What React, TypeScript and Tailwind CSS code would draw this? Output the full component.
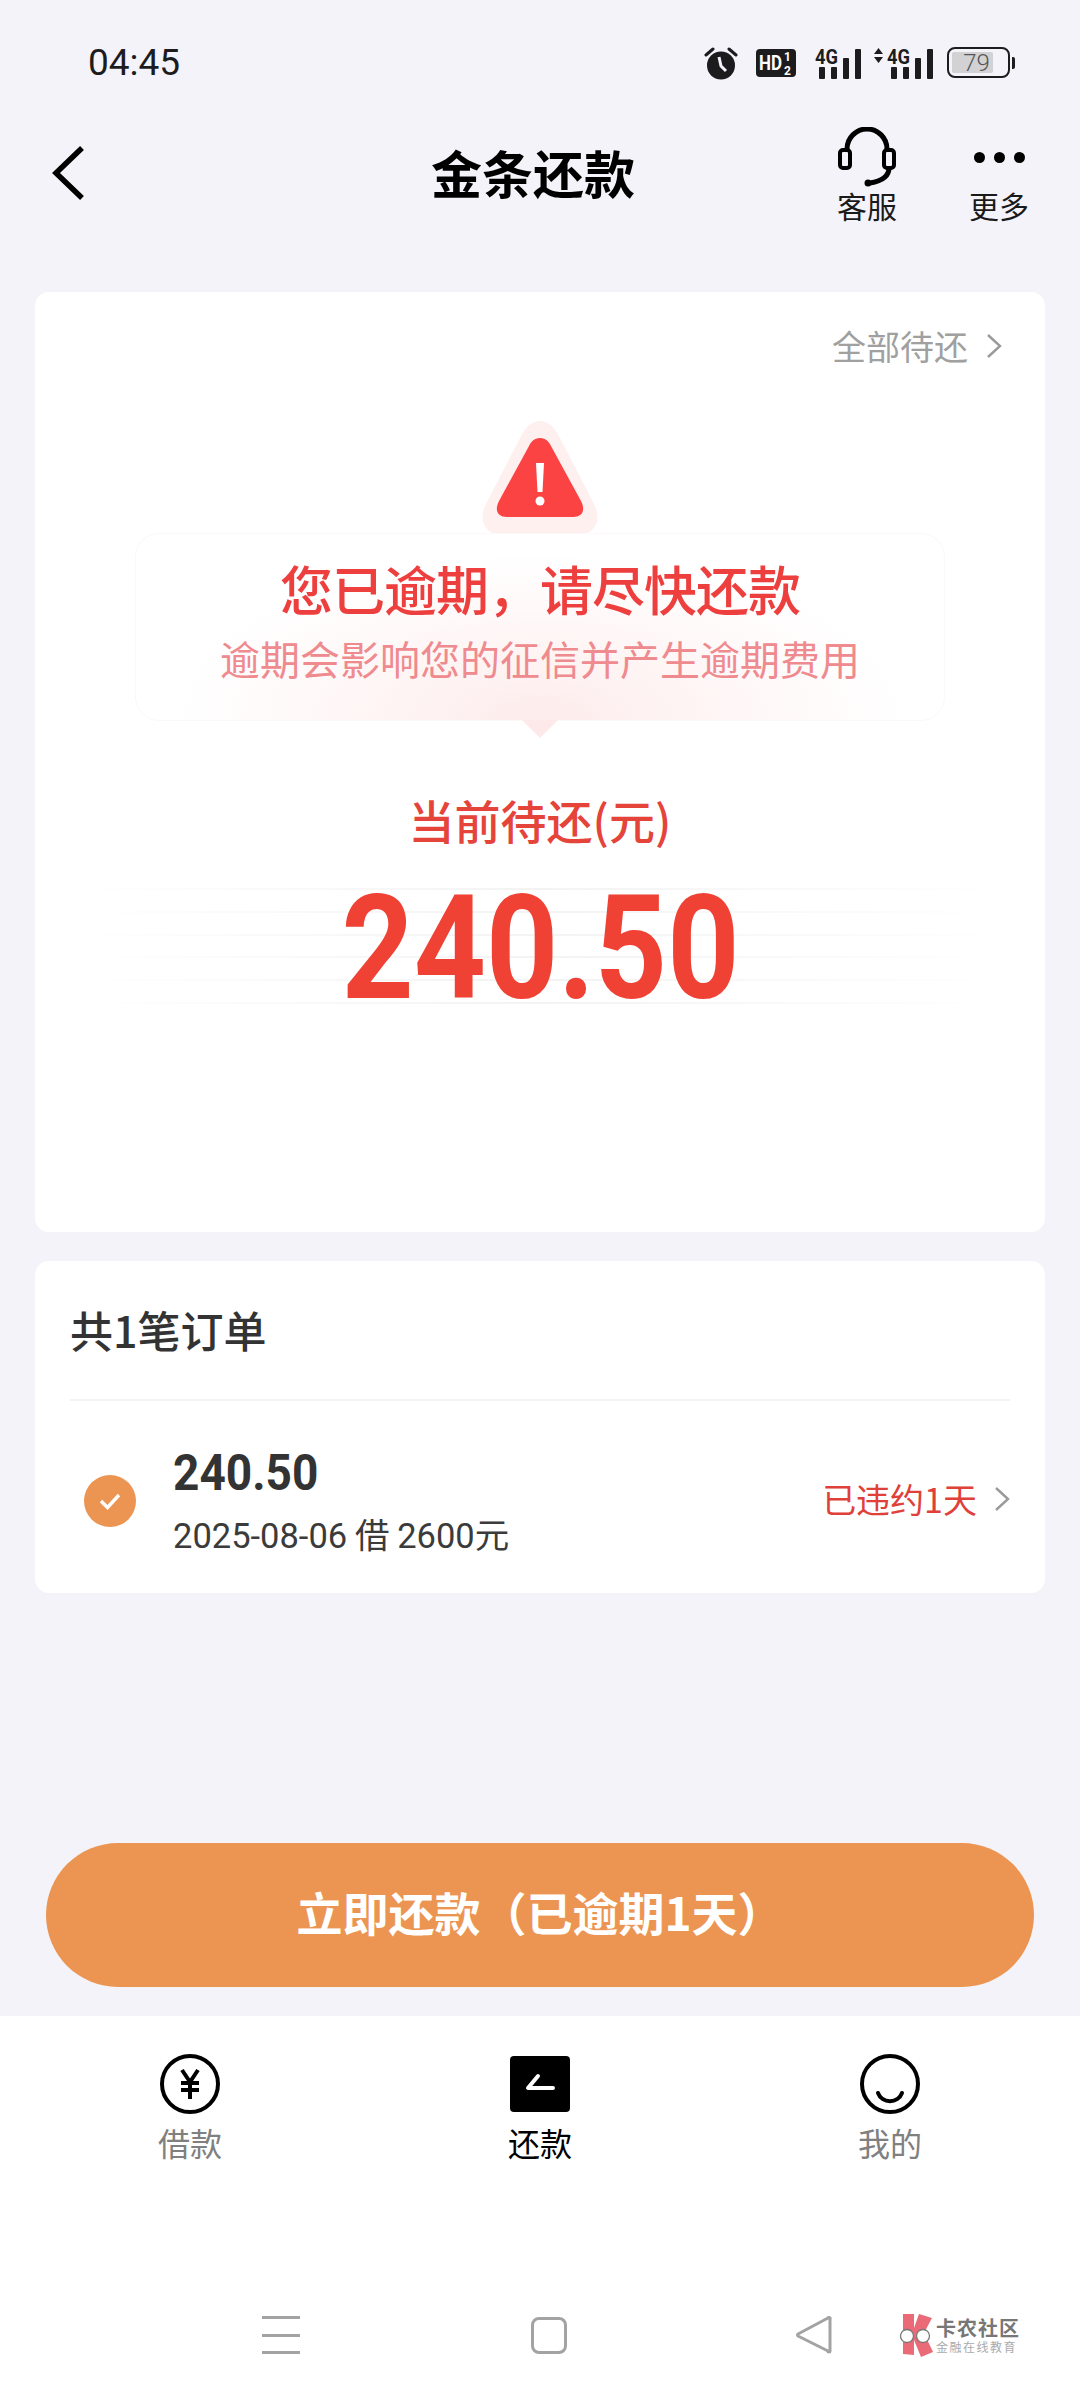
import React from "react";

const CJK = "font-['Noto_Sans_CJK_SC','Noto_Sans',sans-serif]";

function Alarm() {
  return (
    <svg width="34" height="34" viewBox="0 0 34 34" className="shrink-0">
      <circle cx="17" cy="19.5" r="14" fill="#1c1c1e" />
      <path d="M15 11l2 9 5 5" stroke="#f3f3f9" strokeWidth="3" fill="none" />
      <path d="M2 9 9 3M32 9 25 3" stroke="#1c1c1e" strokeWidth="3" strokeLinecap="round" />
    </svg>
  );
}

function HD() {
  return (
    <svg width="40" height="28" viewBox="0 0 40 28" className="shrink-0 overflow-visible">
      <rect width="40" height="28" rx="4" fill="#1c1c1e" />
      <text x="3" y="21" fontSize="20" fontWeight="700" fill="#fff" fontFamily="Roboto" textLength="23" lengthAdjust="spacingAndGlyphs">HD</text>
      <text x="28" y="12" fontSize="12" fontWeight="700" fill="#fff" fontFamily="Roboto">1</text>
      <text x="28" y="26" fontSize="12" fontWeight="700" fill="#fff" fontFamily="Roboto">2</text>
    </svg>
  );
}

function Signal({ arrows }: { arrows?: boolean }) {
  const o = arrows ? 14 : 0;
  return (
    <svg width={46 + o} height="32" viewBox={`0 0 ${46 + o} 32`} className="shrink-0 overflow-visible">
      {arrows && <path d="M1 7 5.5 1 10 7ZM1 10h9l-4.5 6Z" fill="#1c1c1e" />}
      <text x={o} y="17" fontSize="21" fontWeight="700" fill="#1c1c1e" fontFamily="Roboto" textLength="23" lengthAdjust="spacingAndGlyphs">4G</text>
      <rect x={o + 4} y="20" width="6" height="12" rx="1" fill="#1c1c1e" />
      <rect x={o + 16} y="20" width="6" height="12" rx="1" fill="#1c1c1e" />
      <rect x={o + 28} y="11" width="6" height="21" rx="1" fill="#1c1c1e" />
      <rect x={o + 40} y="2" width="6" height="30" rx="1" fill="#1c1c1e" />
    </svg>
  );
}

function Battery() {
  return (
    <div className="flex items-center gap-[2px] shrink-0">
      <div className="relative w-[63px] h-[31px] rounded-[8px] border-2 border-[#1c1c1e] p-[3px]">
        <div className="h-full w-[77%] bg-[#d2d2d4] rounded-[2px]" />
        <span className="absolute inset-0 flex items-center justify-center pr-[4px] text-[24px] leading-none text-[#555] font-['Roboto',sans-serif] font-light">79</span>
      </div>
      <div className="w-[3px] h-[12px] bg-[#1c1c1e] rounded-r-[2px]" />
    </div>
  );
}

function Chevron({ color = "#9a9a9a", className = "" }: { color?: string; className?: string }) {
  return (
    <svg width="16" height="26" viewBox="0 0 16 26" className={`shrink-0 ${className}`}>
      <path d="M2 2 14 13 2 24" stroke={color} strokeWidth="2.4" fill="none" />
    </svg>
  );
}

function Headset() {
  return (
    <svg width="60" height="60" viewBox="0 0 60 60">
      <path d="M10 30V22a20 20 0 0 1 40 0v8" stroke="#000" strokeWidth="5" fill="none" />
      <rect x="3" y="23" width="10" height="18" rx="3" fill="#f3f3f9" stroke="#000" strokeWidth="4" />
      <rect x="47" y="23" width="10" height="18" rx="3" fill="#f3f3f9" stroke="#000" strokeWidth="4" />
      <path d="M52 41c0 9-7 13-19 15" stroke="#000" strokeWidth="5" fill="none" />
      <circle cx="31" cy="56" r="3.5" fill="#000" />
    </svg>
  );
}

function Warn() {
  return (
    <svg width="122" height="116" viewBox="0 0 122 116">
      <path d="M61 1c9 0 15 7 20 17l34 66c9 18 0 31-18 31H25C7 115-2 102 7 84l34-66C46 8 52 1 61 1Z" fill="#fff0f0" />
      <path d="M61 18c6 0 9 4 11 8l30 55c5 10 1 16-8 16H28c-9 0-13-6-8-16l30-55c2-4 5-8 11-8Z" fill="#fb4343" />
      <path d="M57 43h8l-1.5 29h-5Z" fill="#fff" />
      <circle cx="61" cy="81" r="4.5" fill="#fff" />
    </svg>
  );
}

function Logo() {
  return (
    <svg width="36" height="44" viewBox="0 0 36 44" className="shrink-0">
      <path d="M5 1h11v14l5-14 13 4-8 15 9 19-12 5-7-17v15l-11-1Z" fill="#ea6a78" />
      <circle cx="9" cy="23" r="6.5" fill="#fff" stroke="#777" strokeWidth="1.3" />
      <circle cx="25" cy="23" r="6.5" fill="#fff" stroke="#777" strokeWidth="1.3" />
    </svg>
  );
}

function Stripes() {
  return (
    <div className="absolute inset-x-[40px] top-0 bottom-0 flex flex-col justify-between">
      {[0, 1, 2, 3, 4, 5].map((i) => (
        <div key={i} className="h-[2px] bg-gradient-to-r from-transparent via-[#f3f3f4] to-transparent" />
      ))}
    </div>
  );
}

export default function App() {
  return (
    <div className={`w-[1080px] h-[2400px] bg-[#f3f3f9] flex flex-col overflow-hidden ${CJK}`}>
      {/* status bar */}
      <div className="h-[124px] shrink-0 flex items-center justify-between pl-[88px] pr-[65px] pt-[1px]">
        <span className="text-[37px] leading-none text-[#1c1c1e] font-['Roboto',sans-serif]">04:45</span>
        <div className="flex items-center">
          <Alarm />
          <div className="ml-[18px]"><HD /></div>
          <div className="ml-[19px]"><Signal /></div>
          <div className="ml-[12px]"><Signal arrows /></div>
          <div className="ml-[14px]"><Battery /></div>
        </div>
      </div>

      {/* header */}
      <div className="h-[168px] shrink-0 relative flex items-start justify-between pl-[50px] pr-[48px]">
        <svg width="36" height="56" viewBox="0 0 36 56" className="mt-[21px]">
          <path d="M32 3 6 28l26 25" stroke="#000" strokeWidth="5.5" fill="none" />
        </svg>
        <span className="absolute left-0 right-[14px] top-[13px] text-center text-[51px] leading-[70px] font-bold text-black">金条还款</span>
        <div className="flex items-start gap-[66px] mt-[3px]">
          <div className="flex flex-col items-center w-[66px]">
            <Headset />
            <span className="text-[30px] leading-[36px] mt-[0px] text-[#1a1a1a]">客服</span>
          </div>
          <div className="flex flex-col items-center w-[66px]">
            <div className="h-[60px] flex items-center gap-[9px]">
              <span className="w-[11px] h-[11px] rounded-full bg-black" />
              <span className="w-[11px] h-[11px] rounded-full bg-black" />
              <span className="w-[11px] h-[11px] rounded-full bg-black" />
            </div>
            <span className="text-[30px] leading-[36px] mt-[0px] text-[#1a1a1a]">更多</span>
          </div>
        </div>
      </div>

      {/* main card */}
      <div className="mx-[35px] h-[940px] shrink-0 bg-white rounded-[14px] flex flex-col items-center">
        <div className="self-end flex items-center gap-[18px] pr-[43px] pt-[27px] h-[80px]">
          <span className="text-[34px] leading-[50px] text-[#a0a0a0]">全部待还</span>
          <Chevron />
        </div>
        <div className="mt-[48px] h-[116px]">
          <Warn />
        </div>
        <div className="relative w-[810px] h-[188px] -mt-[3px] rounded-[24px] border border-[#fcf8f8] flex flex-col items-center bg-[radial-gradient(ellipse_45%_90%_at_50%_100%,#fdecec_0%,#fff6f6_50%,#ffffff_100%)]">
          <span className="mt-[20px] text-[53px] leading-[68px] font-medium text-[#ee3f3f] tracking-[-1px]">您已逾期，请尽快还款</span>
          <span className="mt-[6px] text-[40px] leading-[60px] text-[#ef8a8f]">逾期会影响您的征信并产生逾期费用</span>
          <div className="absolute left-1/2 -bottom-[18px] -ml-[18px] w-0 h-0 border-x-[18px] border-x-transparent border-t-[18px] border-t-[#fde9e9]" />
        </div>
        <span className="mt-[66px] text-[46px] leading-[64px] font-medium text-[#e5443b]">当前待还(元)</span>
        <div className="relative w-full h-[116px] mt-[37px] flex items-center justify-center">
          <Stripes />
          <span className="relative top-[3px] text-[144px] leading-none font-bold text-[#ef4235] font-['Roboto',sans-serif] scale-x-[0.875]">240.50</span>
        </div>
      </div>

      {/* order card */}
      <div className="mx-[35px] mt-[29px] h-[332px] shrink-0 bg-white rounded-[14px] px-[35px] flex flex-col">
        <div className="h-[140px] shrink-0 flex items-center border-b-2 border-[#f3f3f6] pb-[2px]">
          <span className="text-[43px] leading-none font-medium text-[#333]">共1笔订单</span>
        </div>
        <div className="flex-1 flex items-center">
          <div className="w-[52px] h-[52px] ml-[14px] mt-[8px] rounded-full bg-[#ec9552] flex items-center justify-center shrink-0">
            <svg width="26" height="22" viewBox="0 0 26 22">
              <path d="M4 11l6.5 6.5L22 5" stroke="#fff" strokeWidth="3.4" fill="none" />
            </svg>
          </div>
          <div className="ml-[37px] flex flex-col flex-1 mt-[10px]">
            <span className="text-[50px] leading-[60px] font-bold text-[#333] font-['Roboto',sans-serif] scale-x-[0.92] origin-left">240.50</span>
            <span className="text-[34.5px] leading-[50px] mt-[5px] text-[#3b3b3b]">
              <span className="font-['Roboto',sans-serif]">2025-08-06</span> 借 <span className="font-['Roboto',sans-serif]">2600</span>元
            </span>
          </div>
          <span className="text-[34px] leading-none mt-[4px] text-[#e0403a]">已违约1天</span>
          <Chevron className="ml-[17px] mt-[4px]" />
        </div>
      </div>

      <div className="flex-1" />

      {/* pay button */}
      <div className="mx-[46px] h-[144px] shrink-0 rounded-full bg-[#ec9552] flex items-center justify-center pb-[8px]">
        <span className="text-[46px] leading-none font-bold text-white">立即还款（已逾期1天）</span>
      </div>

      {/* tab bar + system nav */}
      <div className="mt-[29px] h-[384px] shrink-0 bg-white flex flex-col">
        <div className="flex justify-between px-[157px] pt-[38px]">
          <div className="flex flex-col items-center w-[66px]">
            <div className="w-[60px] h-[60px] rounded-full border-[4px] border-black flex items-center justify-center">
              <svg width="26" height="32" viewBox="0 0 26 32">
                <path d="M5 2l8 12 8-12M13 14v17M4 15h18M4 22h18" stroke="#000" strokeWidth="4" fill="none" />
              </svg>
            </div>
            <span className="mt-[5px] text-[32px] leading-[46px] text-[#808080]">借款</span>
          </div>
          <div className="flex flex-col items-center w-[66px]">
            <div className="w-[60px] h-[56px] my-[2px] rounded-[4px] bg-black flex items-center justify-center">
              <svg width="32" height="22" viewBox="0 0 32 22">
                <path d="M14 3 4 15h25" stroke="#fff" strokeWidth="4" fill="none" strokeLinecap="round" strokeLinejoin="round" />
              </svg>
            </div>
            <span className="mt-[5px] text-[32px] leading-[46px] text-black">还款</span>
          </div>
          <div className="flex flex-col items-center w-[66px]">
            <div className="w-[60px] h-[60px] rounded-full border-[4px] border-black flex items-end justify-center pb-[6px]">
              <svg width="30" height="14" viewBox="0 0 30 14">
                <path d="M3 3c4 11 20 11 24 0" stroke="#000" strokeWidth="4" fill="none" strokeLinecap="round" />
              </svg>
            </div>
            <span className="mt-[5px] text-[32px] leading-[46px] text-[#808080]">我的</span>
          </div>
        </div>

        <div className="mt-[140px] relative flex items-center h-[60px] pl-[262px]">
          <div className="w-[38px] h-[38px] flex flex-col justify-between">
            <div className="h-[3px] bg-[#a3a3a3]" />
            <div className="h-[3px] bg-[#a3a3a3]" />
            <div className="h-[3px] bg-[#a3a3a3]" />
          </div>
          <div className="ml-[231px] w-[36px] h-[37px] rounded-[8px] border-[3px] border-[#a3a3a3]" />
          <svg width="38" height="38" viewBox="0 0 38 38" className="ml-[228px]">
            <path d="M35 3v32a1 1 0 0 1-2 0L3 20a1.5 1.5 0 0 1 0-2L33 2a1 1 0 0 1 2 1Z" fill="none" stroke="#a3a3a3" strokeWidth="3" strokeLinejoin="round" />
          </svg>
          <div className="ml-[65px] flex items-center gap-[2px]">
            <Logo />
            <div className="flex flex-col items-start">
              <span className="text-[20px] leading-[24px] font-bold text-[#777] tracking-[1px]">卡农社区</span>
              <span className="text-[12px] leading-[14px] text-[#aaa] tracking-[1.5px]">金融在线教育</span>
            </div>
          </div>
        </div>
      </div>
    </div>
  );
}
